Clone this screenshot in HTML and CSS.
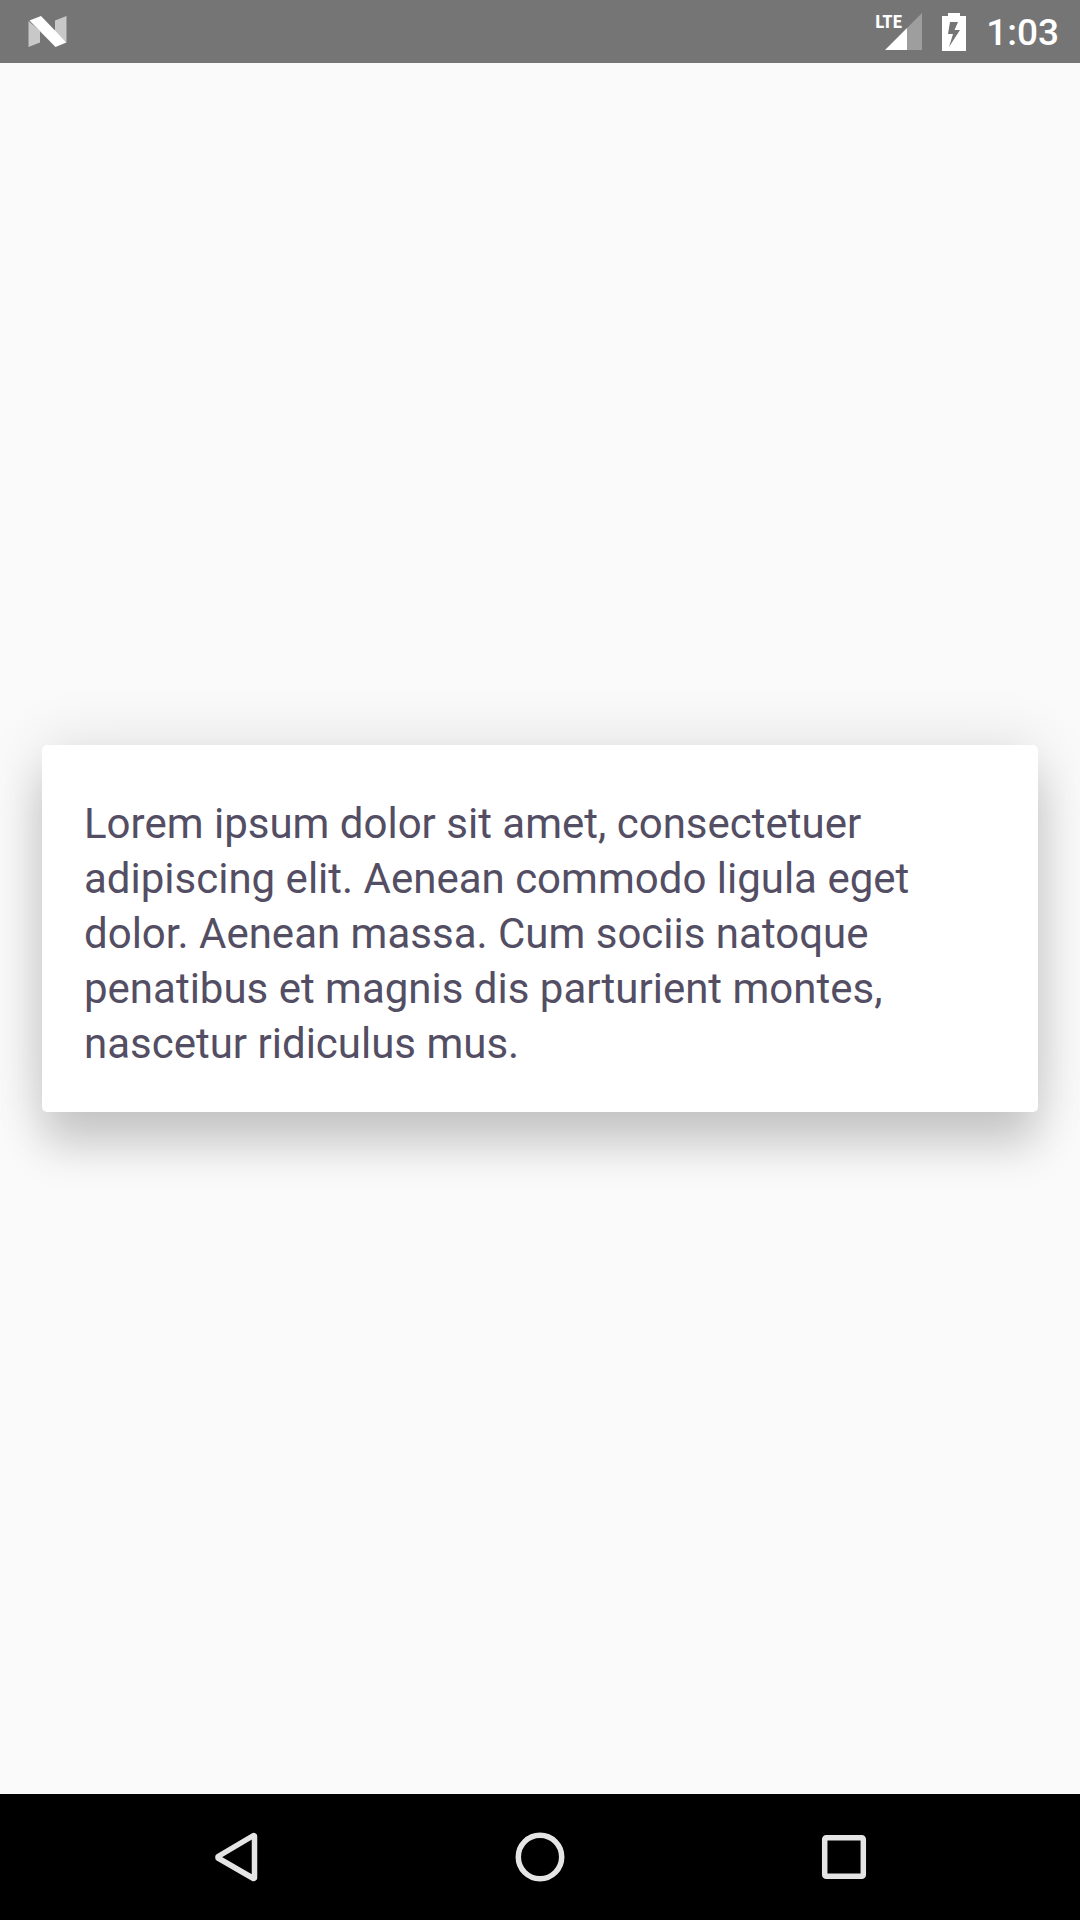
FILE: index.html
```
<!DOCTYPE html>
<html lang="en">
<head>
  <meta charset="utf-8">
  <meta name="viewport" content="width=device-width, initial-scale=1">
  <title>Card</title>
  <link rel="stylesheet" href="styles.css">
</head>
<body>
  <header class="status-bar">
    <svg class="notification" viewBox="0 0 38 31" aria-hidden="true">
      <path fill="#c8c8c8" d="M0 5 11.500 15V26.500L0 31ZM26.500 4.500 38 0V26L26.500 16Z"/>
      <path fill="#fff" d="M1 4.500 12.500 0 38 26.500 27 31Z"/>
    </svg>
    <div class="status-icons">
      <div class="mobile-signal">
        <svg class="signal" viewBox="0 0 37 37" aria-hidden="true">
          <path fill="#9e9e9e" d="M37 0V37H22V15Z"/>
          <path fill="#fff" d="M22 15V37H0Z"/>
        </svg>
        <span class="network">LTE</span>
      </div>
      <svg class="battery" viewBox="0 0 24 38" aria-hidden="true">
        <path fill="#fff" fill-rule="evenodd" d="M6 0H18V3H24V38H0V3H6ZM8 9 6 21H11L7 34 18 17H12.500L16 9Z"/>
      </svg>
      <time class="clock">1:03</time>
    </div>
  </header>

  <main class="content">
    <article class="card">
      <p class="card-text">Lorem ipsum dolor sit amet, consectetuer adipiscing elit. Aenean commodo ligula eget dolor. Aenean massa. Cum sociis natoque penatibus et magnis dis parturient montes, nascetur ridiculus mus.</p>
    </article>
  </main>

  <nav class="nav-bar" aria-label="System">
    <button class="nav-button" type="button" aria-label="Back">
      <svg class="nav-icon" viewBox="0 0 50 50" aria-hidden="true"><path d="M42.500 3.500 43.500 4V46L42.500 46.500 7 26V24.500Z"/></svg>
    </button>
    <button class="nav-button" type="button" aria-label="Home">
      <svg class="nav-icon" viewBox="0 0 50 50" aria-hidden="true"><circle cx="25" cy="25" r="21.700"/></svg>
    </button>
    <button class="nav-button" type="button" aria-label="Overview">
      <svg class="nav-icon" viewBox="0 0 50 50" aria-hidden="true"><rect x="5.700" y="5.700" width="38.600" height="38.600" rx="1.500"/></svg>
    </button>
  </nav>
</body>
</html>
```
FILE: styles.css
```
* {
  box-sizing: border-box;
}

body {
  display: flex;
  flex-direction: column;
  min-height: 100vh;
  margin: 0;
  background: #fafafa;
  font-family: Roboto, sans-serif;
}

.status-bar {
  display: flex;
  align-items: center;
  justify-content: space-between;
  height: 63px;
  padding: 0 21px 0 28px;
  background: #757575;
  color: #fff;
}

.notification {
  width: 39px;
  height: 31px;
}

.status-icons {
  display: flex;
  align-items: center;
  gap: 20px;
}

.mobile-signal {
  position: relative;
  display: flex;
}

.signal {
  width: 37px;
  height: 37px;
}

.network {
  position: absolute;
  top: -1px;
  left: -10px;
  font: bold 19px/19px "Liberation Sans Narrow", "Roboto Condensed", Roboto, sans-serif;
}

.battery {
  width: 24px;
  height: 38px;
}

.clock {
  padding-top: 2px;
  font-size: 37px;
  font-weight: 500;
  line-height: 44px;
}

.content {
  display: flex;
  flex: 1;
  flex-direction: column;
  justify-content: center;
  padding: 42px;
}

.card {
  padding: 51px 42px 41px;
  border-radius: 5px;
  background: #fff;
  box-shadow: 0 36px 44px rgba(0, 0, 0, 0.16), 0 0 60px rgba(0, 0, 0, 0.12);
}

.card-text {
  margin: 0;
  color: #534e63;
  font-size: 42px;
  line-height: 55px;
}

.nav-bar {
  display: flex;
  height: 126px;
  padding: 0 84px;
  background: #000;
}

.nav-button {
  display: flex;
  flex: 1;
  align-items: center;
  justify-content: center;
  padding: 0;
  border: 0;
  background: none;
}

.nav-icon {
  width: 50px;
  height: 50px;
  fill: none;
  stroke: #e5e5e5;
  stroke-linejoin: round;
  stroke-width: 5.5px;
}
```
